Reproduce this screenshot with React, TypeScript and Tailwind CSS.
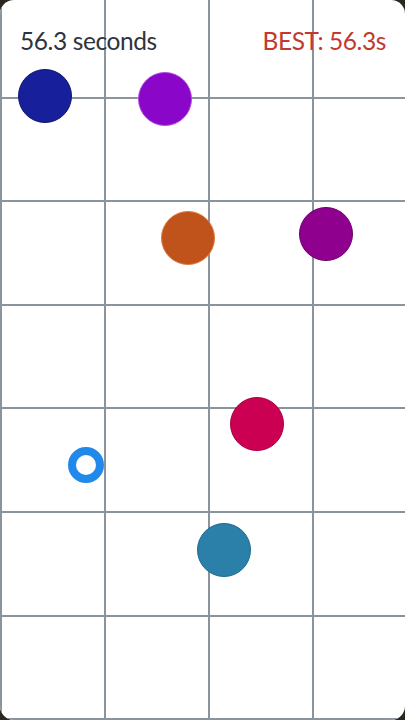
import React from "react";

type Dot = { x: number; y: number; color: string; edge: string };

const dots: Dot[] = [
  { x: 45, y: 96, color: "#17209a", edge: "#10176e" },
  { x: 165, y: 99, color: "#8a06c8", edge: "#b04be0" },
  { x: 188, y: 238, color: "#c0521c", edge: "#e07a3a" },
  { x: 326, y: 234, color: "#8f008f", edge: "#6a006a" },
  { x: 257, y: 424, color: "#cc0052", edge: "#a8003f" },
  { x: 224, y: 550, color: "#2a80a8", edge: "#1f6a8e" },
];

const cells = Array.from({ length: 28 }, (_, i) => i);

export default function App() {
  return (
    <div className="w-[405px] h-[720px] bg-[#2a2620] overflow-hidden">
      <div className="relative w-full h-full bg-white rounded-[14px] overflow-hidden">
        {/* board grid */}
        <div className="absolute left-0 top-[-5px] grid grid-cols-[repeat(4,104px)] grid-rows-[repeat(7,103.6px)]">
          {cells.map((i) => (
            <div key={i} className="border-l-2 border-b-2 border-[#8b949d]" />
          ))}
        </div>

        {/* header */}
        <div className="relative flex items-center justify-between pl-5 pr-[19px] pt-[22px] h-[60px] font-['Lato','Noto_Sans',sans-serif]">
          <span className="text-[24.5px] leading-none tracking-[-0.4px] text-[#2c3440]">56.3 seconds</span>
          <span className="text-[24.5px] leading-none tracking-[-0.4px] text-[#c23a2e]">BEST: 56.3s</span>
        </div>

        {dots.map((d, i) => (
          <div
            key={i}
            className="absolute w-[54px] h-[54px] rounded-full border"
            style={{ left: d.x - 27, top: d.y - 27, background: d.color, borderColor: d.edge }}
          />
        ))}

        {/* player */}
        <div className="absolute left-[68px] top-[447px] w-[36px] h-[36px] rounded-full border-[8px] border-[#2189ea] bg-white" />
      </div>
    </div>
  );
}
